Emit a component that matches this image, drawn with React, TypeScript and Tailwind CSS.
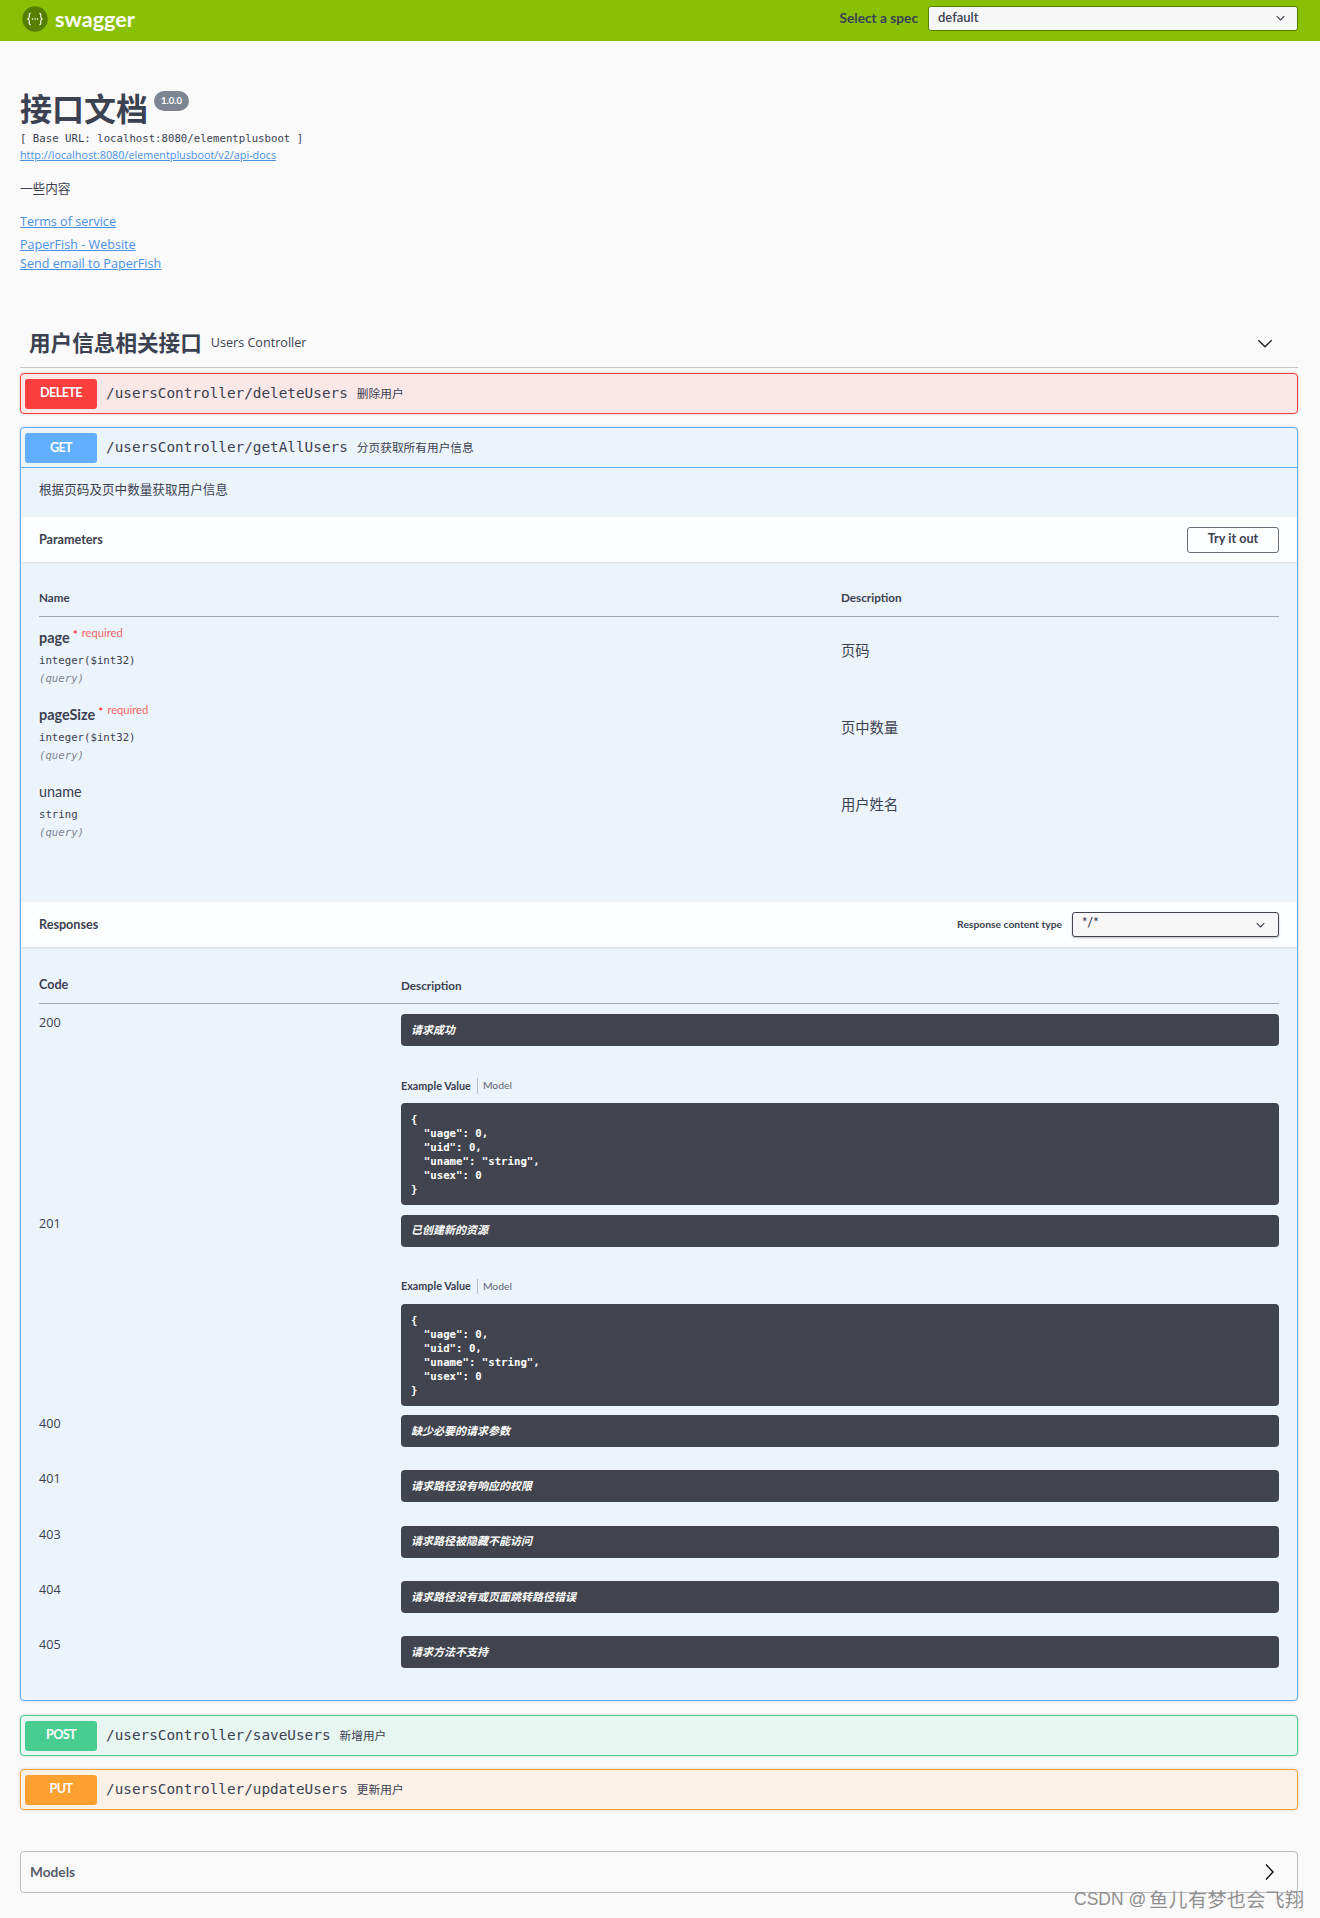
import React from "react";

const sans = "font-['Lato','Noto_Sans_CJK_SC',sans-serif]";
const body = "font-['Open_Sans','Noto_Sans_CJK_SC',sans-serif]";
const mono = "font-['DejaVu_Sans_Mono','Noto_Sans_CJK_SC',monospace]";

function Chevron({ className, thin }: { className: string; thin?: boolean }) {
  return (
    <svg viewBox="0 0 12 8" className={className} fill="none" stroke="currentColor" strokeWidth={thin ? 1 : 1.5}>
      <path d="M1 1.5 L6 6.5 L11 1.5" />
    </svg>
  );
}

function Summary({
  method,
  path,
  desc,
  badge,
  open,
  border,
}: {
  method: string;
  path: string;
  desc: string;
  badge: string;
  open?: boolean;
  border?: string;
}) {
  return (
    <div className={`flex items-center pl-[4px] ${open ? "h-[40px] border-b pt-[1px] " + border : "h-[39px]"}`}>
      <div
        className={`flex h-[30px] w-[72px] items-center justify-center rounded-[3px] text-[12.6px] font-bold tracking-[-0.6px] text-white ${sans} ${badge}`}
      >
        {method}
      </div>
      <span className={`ml-[9px] text-[14.35px] text-[#3b4151] ${mono}`}>{path}</span>
      <span className={`ml-[9px] text-[11.7px] text-[#3b4151] ${body}`}>{desc}</span>
    </div>
  );
}

function Block({ kind, method, path, desc }: { kind: "del" | "post" | "put"; method: string; path: string; desc: string }) {
  const styles = {
    del: { wrap: "border-[#f93e3e] bg-[#fae7e7]", badge: "bg-[#f93e3e]" },
    post: { wrap: "border-[#49cc90] bg-[#e7f6f0]", badge: "bg-[#49cc90]" },
    put: { wrap: "border-[#fca130] bg-[#fbf1e7]", badge: "bg-[#fca130]" },
  }[kind];
  return (
    <div className={`h-[41px] rounded-[4px] border shadow-[0_0_3px_rgba(0,0,0,0.19)] ${styles.wrap}`}>
      <Summary method={method} path={path} desc={desc} badge={styles.badge} />
    </div>
  );
}

function Param({ name, required, desc }: { name: string; required?: boolean; desc: string }) {
  return (
    <div className="grid h-[77px] grid-cols-[802px_1fr] pt-[8px]">
      <div>
        <div className="flex h-[24px] items-start">
          {required ? (
            <>
              <span className={`mt-[1px] text-[14.4px] font-bold leading-[24px] text-[#3b4151] ${sans}`}>{name}</span>
              <span className={`ml-[3px] mt-[3px] text-[12px] leading-[14px] text-[#ff0000] ${sans}`}>*</span>
              <span className={`ml-[4px] mt-[2px] text-[11.2px] leading-[12px] text-[#f93e3e] opacity-80 ${sans}`}>required</span>
            </>
          ) : (
            <span className={`mt-[1px] text-[14.4px] leading-[24px] text-[#3b4151] ${sans}`}>{name}</span>
          )}
        </div>
        <div className={`mt-[5px] text-[10.7px] leading-[14px] text-[#3b4151] ${mono}`}>
          {name === "uname" ? "string" : "integer($int32)"}
        </div>
        <div className={`mt-[4px] text-[10.7px] italic leading-[14px] text-[#7d8492] ${mono}`}>(query)</div>
      </div>
      <div className={`pt-[15px] text-[14.3px] leading-[22px] text-[#3b4151] ${body}`}>{desc}</div>
    </div>
  );
}

function DarkLabel({ text }: { text: string }) {
  return (
    <div
      className={`flex h-[32px] items-center rounded-[4px] bg-[#41444e] pl-[10px] text-[11px] font-bold italic text-white ${body}`}
    >
      {text}
    </div>
  );
}

const json = `{
  "uage": 0,
  "uid": 0,
  "uname": "string",
  "usex": 0
}`;

function Response({ code, text, example }: { code: string; text: string; example?: boolean }) {
  return (
    <div className={`grid grid-cols-[362px_1fr] pt-[10px] ${example ? "h-[200.5px]" : "h-[55.25px]"}`}>
      <div className={`text-[12.6px] leading-[18px] text-[#3b4151] ${body}`}>{code}</div>
      <div>
        <DarkLabel text={text} />
        {example && (
          <>
            <div className="mt-[32px] flex h-[16px] items-center">
              <span className={`pr-[6px] text-[10.8px] font-bold text-[#3b4151] ${sans}`}>Example Value</span>
              <span className={`border-l border-[#b9bdc6] pl-[5px] text-[10.4px] text-[#5f6675] ${sans}`}>Model</span>
            </div>
            <pre
              className={`mt-[9px] h-[102px] rounded-[4px] bg-[#41444e] px-[10px] pb-[8px] pt-[10px] text-[10.7px] font-semibold leading-[14px] text-white ${mono}`}
            >
              {json}
            </pre>
          </>
        )}
      </div>
    </div>
  );
}

function BandTitle({ children }: { children: React.ReactNode }) {
  return (
    <div className="flex h-[45px] items-center justify-between bg-[#fcfdfe] px-[18px] shadow-[0_1px_2px_rgba(0,0,0,0.1)]">
      {children}
    </div>
  );
}

export default function App() {
  return (
    <div className={`relative h-[1918px] w-[1320px] overflow-hidden bg-[#fafafa] ${body}`}>
      <header className="flex h-[41px] items-center justify-between bg-[#89bf04] pl-[22px] pr-[22px]">
        <div className="mb-[2px] flex items-center">
          <svg viewBox="0 0 26 26" className="h-[26px] w-[26px]">
            <circle cx="13" cy="13" r="12.7" fill="#547f00" />
            <path
              d="M8.6 7.4 C7 7.4 7.3 8.6 7.3 10.3 C7.3 11.9 6.9 12.6 5.9 13 C6.9 13.4 7.3 14.1 7.3 15.7 C7.3 17.4 7 18.6 8.6 18.6 M17.4 7.4 C19 7.4 18.7 8.6 18.7 10.3 C18.7 11.9 19.1 12.6 20.1 13 C19.1 13.4 18.7 14.1 18.7 15.7 C18.7 17.4 19 18.6 17.4 18.6"
              fill="none"
              stroke="#fff"
              strokeWidth="1.1"
            />
            <circle cx="10.5" cy="13" r="0.8" fill="#fff" />
            <circle cx="13" cy="13" r="0.8" fill="#fff" />
            <circle cx="15.5" cy="13" r="0.8" fill="#fff" />
          </svg>
          <span className={`ml-[7px] text-[21.6px] font-bold text-white ${sans}`}>swagger</span>
        </div>
        <div className="mb-[5px] flex items-center">
          <span className={`mr-[10px] text-[13.7px] font-bold text-[#3b4151] ${sans}`}>Select a spec</span>
          <div
            className={`flex h-[25px] w-[370px] items-center justify-between rounded-[3px] border border-[#547f00] bg-[#f7f7f7] pl-[9px] pr-[12px] text-[13px] font-semibold text-[#3b4151] ${sans}`}
          >
            default
            <Chevron className="h-[6px] w-[9px] text-[#3b4151]" />
          </div>
        </div>
      </header>

      <main className="pl-[20px] pr-[22px]">
        <section className="h-[285px] pt-[46px]">
          <div className="flex h-[44px] items-start">
            <h1 className={`text-[32px] font-bold leading-[44px] text-[#3b4151] ${sans}`}>接口文档</h1>
            <span
              className={`ml-[6px] mt-[4px] flex h-[20px] w-[35px] items-center justify-center rounded-[10px] bg-[#7d8492] text-[9.5px] font-bold text-white ${sans}`}
            >
              1.0.0
            </span>
          </div>
          <div className={`h-[16px] text-[10.7px] leading-[16px] text-[#3b4151] ${mono}`}>
            [ Base URL: localhost:8080/elementplusboot ]
          </div>
          <a className={`block text-[10.8px] leading-[16px] text-[#4990e2] underline ${body}`}>
            http://localhost:8080/elementplusboot/v2/api-docs
          </a>
          <p className={`mt-[17px] text-[12.6px] leading-[18px] text-[#3b4151] ${body}`}>一些内容</p>
          <a className={`mt-[15px] block text-[12.6px] leading-[18px] text-[#4990e2] underline ${body}`}>Terms of service</a>
          <a className={`mt-[5px] block text-[12.6px] leading-[18px] text-[#4990e2] underline ${body}`}>PaperFish - Website</a>
          <a className={`mt-[1px] block text-[12.6px] leading-[18px] text-[#4990e2] underline ${body}`}>Send email to PaperFish</a>
        </section>

        <div className="flex h-[42px] items-center justify-between border-b border-[#c5c6c9] pb-[7px] pl-[9px] pr-[25px]">
          <div className="flex items-center">
            <span className={`text-[21.6px] font-bold text-[#3b4151] ${sans}`}>用户信息相关接口</span>
            <span className={`ml-[9px] text-[12.6px] text-[#3b4151] ${body}`}>Users Controller</span>
          </div>
          <Chevron thin className="h-[11px] w-[16px] text-[#222]" />
        </div>

        <div className="mt-[5px]">
          <Block kind="del" method="DELETE" path="/usersController/deleteUsers" desc="删除用户" />
        </div>

        <div className="mt-[13px] h-[1274px] rounded-[4px] border border-[#61affe] bg-[#ebf3fb] shadow-[0_0_3px_rgba(0,0,0,0.19)]">
          <Summary
            method="GET"
            path="/usersController/getAllUsers"
            desc="分页获取所有用户信息"
            badge="bg-[#61affe]"
            open
            border="border-[#61affe]"
          />
          <div className={`flex h-[49px] items-center px-[18px] pb-[4px] text-[12.6px] text-[#3b4151] ${body}`}>
            根据页码及页中数量获取用户信息
          </div>
          <BandTitle>
            <span className={`pt-[2px] text-[12.6px] font-bold text-[#3b4151] ${sans}`}>Parameters</span>
            <button
              className={`flex h-[26px] w-[92px] items-center justify-center rounded-[3px] border border-[#6b6f7a] text-[12.6px] font-bold text-[#3b4151] ${sans}`}
            >
              Try it out
            </button>
          </BandTitle>

          <div className="h-[340px] px-[18px]">
            <div className="grid h-[55px] grid-cols-[802px_1fr] items-end border-b border-[#a3a8b5] pb-[9px]">
              <span className={`text-[11.7px] font-bold text-[#3b4151] ${sans}`}>Name</span>
              <span className={`text-[11.7px] font-bold text-[#3b4151] ${sans}`}>Description</span>
            </div>
            <Param name="page" required desc="页码" />
            <Param name="pageSize" required desc="页中数量" />
            <Param name="uname" desc="用户姓名" />
          </div>

          <BandTitle>
            <span className={`pt-[2px] text-[12.6px] font-bold text-[#3b4151] ${sans}`}>Responses</span>
            <div className="flex items-center">
              <span className={`mr-[10px] text-[10.3px] font-bold text-[#3b4151] ${sans}`}>Response content type</span>
              <div
                className={`flex h-[25px] w-[207px] items-center justify-between rounded-[3px] border border-[#41444e] bg-[#f7f7f7] pl-[9px] pr-[13px] text-[12.6px] font-semibold text-[#3b4151] shadow-[0_1px_2px_rgba(0,0,0,0.25)] ${sans}`}
              >
                <span className="-mt-[3px]">*/*</span>
                <Chevron className="h-[6px] w-[9px] text-[#3b4151]" />
              </div>
            </div>
          </BandTitle>

          <div className="px-[18px]">
            <div className="grid h-[57px] grid-cols-[362px_1fr] items-end border-b border-[#a3a8b5] pb-[10px]">
              <span className={`text-[12.6px] font-bold leading-[16px] text-[#3b4151] ${sans}`}>Code</span>
              <span className={`text-[11.7px] font-bold leading-[16px] text-[#3b4151] ${sans}`}>Description</span>
            </div>
            <Response code="200" text="请求成功" example />
            <Response code="201" text="已创建新的资源" example />
            <Response code="400" text="缺少必要的请求参数" />
            <Response code="401" text="请求路径没有响应的权限" />
            <Response code="403" text="请求路径被隐藏不能访问" />
            <Response code="404" text="请求路径没有或页面跳转路径错误" />
            <Response code="405" text="请求方法不支持" />
          </div>
        </div>

        <div className="mt-[14px]">
          <Block kind="post" method="POST" path="/usersController/saveUsers" desc="新增用户" />
        </div>
        <div className="mt-[13px]">
          <Block kind="put" method="PUT" path="/usersController/updateUsers" desc="更新用户" />
        </div>

        <div className="mt-[41px] flex h-[42px] items-center justify-between rounded-[4px] border border-[#bdbdbd] pl-[9px] pr-[23px]">
          <span className={`text-[13.7px] font-bold text-[#3b4151] opacity-85 ${sans}`}>Models</span>
          <svg viewBox="0 0 9 16" className="h-[16px] w-[9px]" fill="none" stroke="#111" strokeWidth="1.4">
            <path d="M1 0.5 L8 8 L1 15.5" />
          </svg>
        </div>
      </main>

      <div className="absolute left-[1074px] top-[1885px] flex items-center whitespace-nowrap text-[#8f8f8f]">
        <span className="font-['Liberation_Sans',sans-serif] text-[17.5px]">CSDN @</span>
        <span className="ml-[3px] font-['Noto_Sans_CJK_SC',sans-serif] text-[19px] tracking-[0.4px]">鱼儿有梦也会飞翔</span>
      </div>
    </div>
  );
}
